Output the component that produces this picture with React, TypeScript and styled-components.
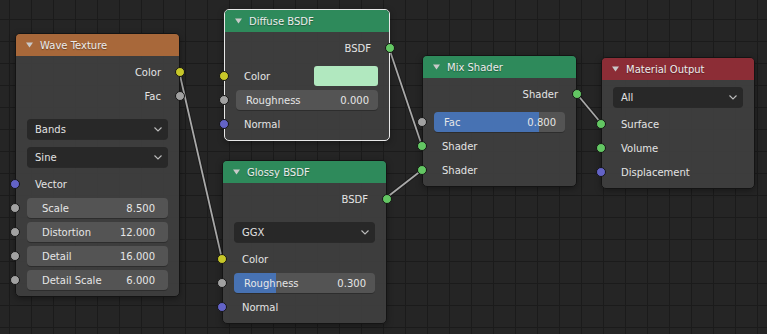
import styled, { createGlobalStyle } from 'styled-components'

const GlobalStyle = createGlobalStyle`
  * { box-sizing: border-box; }
  body {
    margin: 0;
    background: #242424;
    font-family: 'DejaVu Sans', 'Liberation Sans', sans-serif;
  }
`

const SOCKET = {
  color: '#c7c729',
  float: '#a1a1a1',
  vector: '#6363c7',
  shader: '#63c763',
}

type SocketKind = keyof typeof SOCKET

const Canvas = styled.div`
  position: relative;
  width: 767px;
  height: 334px;
  overflow: hidden;
  background-color: #252525;
  background-image:
    linear-gradient(to right, #1b1b1b 1px, transparent 1px),
    linear-gradient(to bottom, #1b1b1b 1px, transparent 1px);
  background-size: 22px 22px;
  background-position: 9px 19px;
`

const WireLayer = styled.svg`
  position: absolute;
  inset: 0;
  width: 767px;
  height: 334px;
`

const NodeFrame = styled.div<{ $x: number; $y: number; $w: number; $selected?: boolean }>`
  position: absolute;
  left: ${(p) => p.$x}px;
  top: ${(p) => p.$y}px;
  width: ${(p) => p.$w}px;
  border: 1px solid ${(p) => (p.$selected ? '#e8e8e8' : '#141414')};
  border-radius: 5px;
  background: rgba(62, 62, 62, 0.95);
  box-shadow: 0 2px 6px rgba(0, 0, 0, 0.35);
  color: #e4e4e4;
  font-size: 10px;
`

const Header = styled.div<{ $color: string }>`
  height: 22px;
  display: flex;
  align-items: center;
  gap: 7px;
  padding-left: 10px;
  background: ${(p) => p.$color};
  border-radius: 4px 4px 0 0;
  font-size: 10px;
  color: #ececec;
  text-shadow: 0 1px 1px rgba(0, 0, 0, 0.35);
`

const Caret = styled.svg`
  width: 7px;
  height: 6px;
  flex: none;
`

const List = styled.div<{ $top?: number }>`
  display: flex;
  flex-direction: column;
  padding-top: ${(p) => p.$top ?? 4}px;
`

const Buttons = styled.div<{ $top: number; $bottom: number }>`
  display: flex;
  flex-direction: column;
  gap: 8px;
  padding: ${(p) => p.$top}px 11px ${(p) => p.$bottom}px;
`

const Footer = styled.div`
  height: 4px;
`

const Row = styled.div<{ $out?: boolean }>`
  position: relative;
  height: 24px;
  display: flex;
  align-items: center;
  justify-content: ${(p) => (p.$out ? 'flex-end' : 'space-between')};
  padding: ${(p) => (p.$out ? '0 18px 0 0' : '0 11px 0 19px')};
  white-space: nowrap;
`

const FieldRow = styled(Row)`
  padding: 0 11px;
`

const Socket = styled.span<{ $kind: SocketKind; $out?: boolean }>`
  position: absolute;
  top: 7px;
  ${(p) => (p.$out ? 'right: -6px;' : 'left: -6px;')}
  width: 10px;
  height: 10px;
  border-radius: 50%;
  background: ${(p) => SOCKET[p.$kind]};
  border: 1px solid #151515;
`

const Field = styled.div<{ $fill?: number; $pad?: number }>`
  flex: 1;
  height: 20px;
  display: flex;
  align-items: center;
  justify-content: space-between;
  padding: 0 ${(p) => (p.$pad ? p.$pad - 2 : 9)}px 0 ${(p) => p.$pad ?? 10}px;
  border-radius: 4px;
  background: ${(p) =>
    p.$fill !== undefined
      ? `linear-gradient(to right, #4772b3 ${p.$fill * 100}%, #545454 ${p.$fill * 100}%)`
      : '#545454'};
  box-shadow: 0 1px 0 rgba(0, 0, 0, 0.25);
  color: #e6e6e6;
`

const Dropdown = styled.div`
  height: 20px;
  display: flex;
  align-items: center;
  justify-content: space-between;
  padding: 0 6px 0 8px;
  border-radius: 4px;
  background: #282828;
  box-shadow: 0 1px 0 rgba(0, 0, 0, 0.3);
  color: #e2e2e2;
`

const Chevron = styled.svg`
  width: 8px;
  height: 5px;
`

const Swatch = styled.div<{ $color: string }>`
  width: 64px;
  height: 20px;
  border-radius: 3px;
  background: ${(p) => p.$color};
`

function NodeHeader({ title, color }: { title: string; color: string }) {
  return (
    <Header $color={color}>
      <Caret viewBox="0 0 7 6">
        <path d="M0 0.5 H7 L3.5 5.5 Z" fill="#c9c9c9" />
      </Caret>
      {title}
    </Header>
  )
}

function Output({ label, kind }: { label: string; kind: SocketKind }) {
  return (
    <Row $out>
      {label}
      <Socket $kind={kind} $out />
    </Row>
  )
}

function Input({ label, kind, children }: { label: string; kind: SocketKind; children?: React.ReactNode }) {
  return (
    <Row>
      <span>{label}</span>
      {children}
      <Socket $kind={kind} />
    </Row>
  )
}

function NumberInput({ label, value, fill, pad }: { label: string; value: string; fill?: number; pad?: number }) {
  return (
    <FieldRow>
      <Field $fill={fill} $pad={pad}>
        <span>{label}</span>
        <span>{value}</span>
      </Field>
      <Socket $kind="float" />
    </FieldRow>
  )
}

function Select({ value }: { value: string }) {
  return (
    <Dropdown>
      {value}
      <Chevron viewBox="0 0 8 5">
        <path d="M0.5 0.5 L4 4 L7.5 0.5" fill="none" stroke="#bdbdbd" strokeWidth="1.1" />
      </Chevron>
    </Dropdown>
  )
}

const links = [
  [179, 71, 222, 259],
  [389, 48, 422, 146],
  [386, 198, 422, 170],
  [576, 93, 601, 123],
]

export default function App() {
  return (
    <>
      <GlobalStyle />
      <Canvas>
        <WireLayer>
          {links.map(([x1, y1, x2, y2], i) => (
            <g key={i}>
              <line x1={x1} y1={y1} x2={x2} y2={y2} stroke="#151515" strokeWidth="3.6" strokeOpacity="0.7" />
              <line x1={x1} y1={y1} x2={x2} y2={y2} stroke="#a9a9a9" strokeWidth="1.8" />
            </g>
          ))}
        </WireLayer>

        <NodeFrame $x={15} $y={33} $w={165}>
          <NodeHeader title="Wave Texture" color="#a8683a" />
          <List>
            <Output label="Color" kind="color" />
            <Output label="Fac" kind="float" />
          </List>
          <Buttons $top={11} $bottom={1}>
            <Select value="Bands" />
            <Select value="Sine" />
          </Buttons>
          <List>
            <Input label="Vector" kind="vector" />
            <NumberInput label="Scale" value="8.500" pad={15} />
            <NumberInput label="Distortion" value="12.000" pad={15} />
            <NumberInput label="Detail" value="16.000" pad={15} />
            <NumberInput label="Detail Scale" value="6.000" pad={15} />
          </List>
          <Footer />
        </NodeFrame>

        <NodeFrame $x={224} $y={9} $w={166} $selected>
          <NodeHeader title="Diffuse BSDF" color="#2e8a5b" />
          <List>
            <Output label="BSDF" kind="shader" />
          </List>
          <List>
            <Input label="Color" kind="color">
              <Swatch $color="#b1e8bf" />
            </Input>
            <NumberInput label="Roughness" value="0.000" />
            <Input label="Normal" kind="vector" />
          </List>
          <Footer />
        </NodeFrame>

        <NodeFrame $x={222} $y={160} $w={165}>
          <NodeHeader title="Glossy BSDF" color="#2e8a5b" />
          <List>
            <Output label="BSDF" kind="shader" />
          </List>
          <Buttons $top={11} $bottom={1}>
            <Select value="GGX" />
          </Buttons>
          <List>
            <Input label="Color" kind="color" />
            <NumberInput label="Roughness" value="0.300" fill={0.3} />
            <Input label="Normal" kind="vector" />
          </List>
          <Footer />
        </NodeFrame>

        <NodeFrame $x={422} $y={55} $w={155}>
          <NodeHeader title="Mix Shader" color="#2e8a5b" />
          <List>
            <Output label="Shader" kind="shader" />
          </List>
          <List>
            <NumberInput label="Fac" value="0.800" fill={0.8} />
            <Input label="Shader" kind="shader" />
            <Input label="Shader" kind="shader" />
          </List>
          <Footer />
        </NodeFrame>

        <NodeFrame $x={601} $y={57} $w={154}>
          <NodeHeader title="Material Output" color="#8c2d36" />
          <Buttons $top={7} $bottom={1}>
            <Select value="All" />
          </Buttons>
          <List>
            <Input label="Surface" kind="shader" />
            <Input label="Volume" kind="shader" />
            <Input label="Displacement" kind="vector" />
          </List>
          <Footer />
        </NodeFrame>
      </Canvas>
    </>
  )
}
